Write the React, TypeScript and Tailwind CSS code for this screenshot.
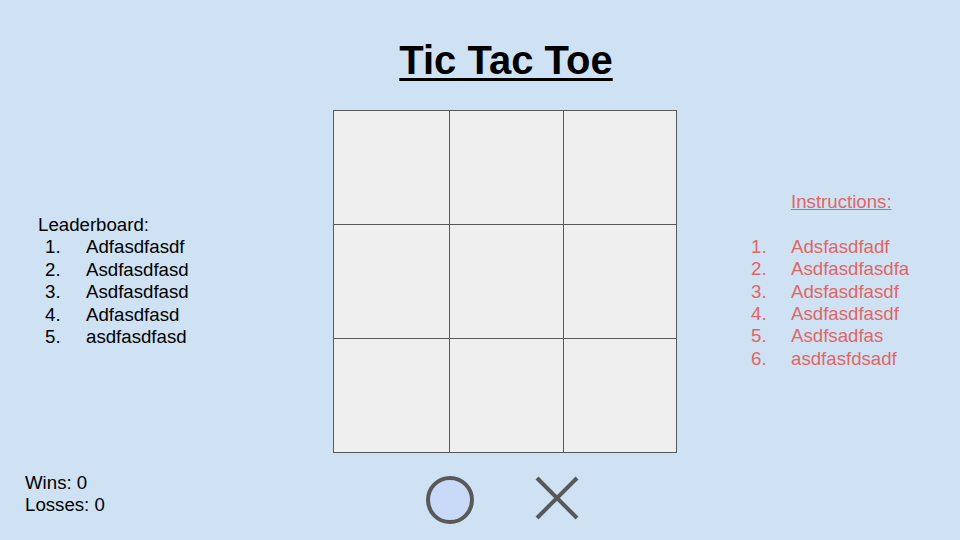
import React from 'react';

const leaders = ['Adfasdfasdf', 'Asdfasdfasd', 'Asdfasdfasd', 'Adfasdfasd', 'asdfasdfasd'];
const steps = ['Adsfasdfadf', 'Asdfasdfasdfa', 'Adsfasdfasdf', 'Asdfasdfasdf', 'Asdfsadfas', 'asdfasfdsadf'];

const App: React.FC = () => {
  return (
    <div className="w-[960px] h-[540px] bg-[#cfe2f3] flex flex-col overflow-hidden font-['Liberation_Sans',Arial,sans-serif] text-[18.67px] leading-[22.4px] text-black">
      {/* Title */}
      <div className="h-[110px] pt-[37px] pl-[52px] flex justify-center">
        <h1 className="text-[40px] leading-[1.15] font-bold underline decoration-[3px] underline-offset-[4px]">
          Tic Tac Toe
        </h1>
      </div>

      {/* Middle row */}
      <div className="flex h-[343px]">
        {/* Leaderboard */}
        <div className="w-[333px] pt-[104px] pl-[38px]">
          <div>Leaderboard:</div>
          {leaders.map((name, i) => (
            <div key={i} className="flex pl-[7px]">
              <span className="w-[41px]">{i + 1}.</span>
              <span>{name}</span>
            </div>
          ))}
        </div>

        {/* Board */}
        <div className="w-[344px] h-[343px] grid grid-cols-[115px_113px_112px] grid-rows-3 gap-px bg-[#595959] p-px">
          {Array.from({ length: 9 }).map((_, i) => (
            <div key={i} className="bg-[#efefef]" />
          ))}
        </div>

        {/* Instructions */}
        <div className="flex-1 pt-[81px] pl-[74px] text-[#e06666]">
          <div className="pl-[40px] underline">Instructions:</div>
          <div className="h-[22.4px]" />
          {steps.map((s, i) => (
            <div key={i} className="flex">
              <span className="w-[40px]">{i + 1}.</span>
              <span>{s}</span>
            </div>
          ))}
        </div>
      </div>

      {/* Bottom row */}
      <div className="flex flex-1">
        <div className="w-[424px] pl-[25px] pt-[19px]">
          <div>Wins: 0</div>
          <div>Losses: 0</div>
        </div>
        <svg className="mt-[21px]" width="52" height="52" viewBox="0 0 52 52">
          <circle cx="26" cy="26" r="22" fill="#c9daf8" stroke="#595959" strokeWidth="4" />
        </svg>
        <svg className="mt-[23px] ml-[59px]" width="44" height="44" viewBox="0 0 44 44">
          <line x1="2" y1="2" x2="42" y2="42" stroke="#595959" strokeWidth="4" />
          <line x1="42" y1="2" x2="2" y2="42" stroke="#595959" strokeWidth="4" />
        </svg>
      </div>
    </div>
  );
};

export default App;
